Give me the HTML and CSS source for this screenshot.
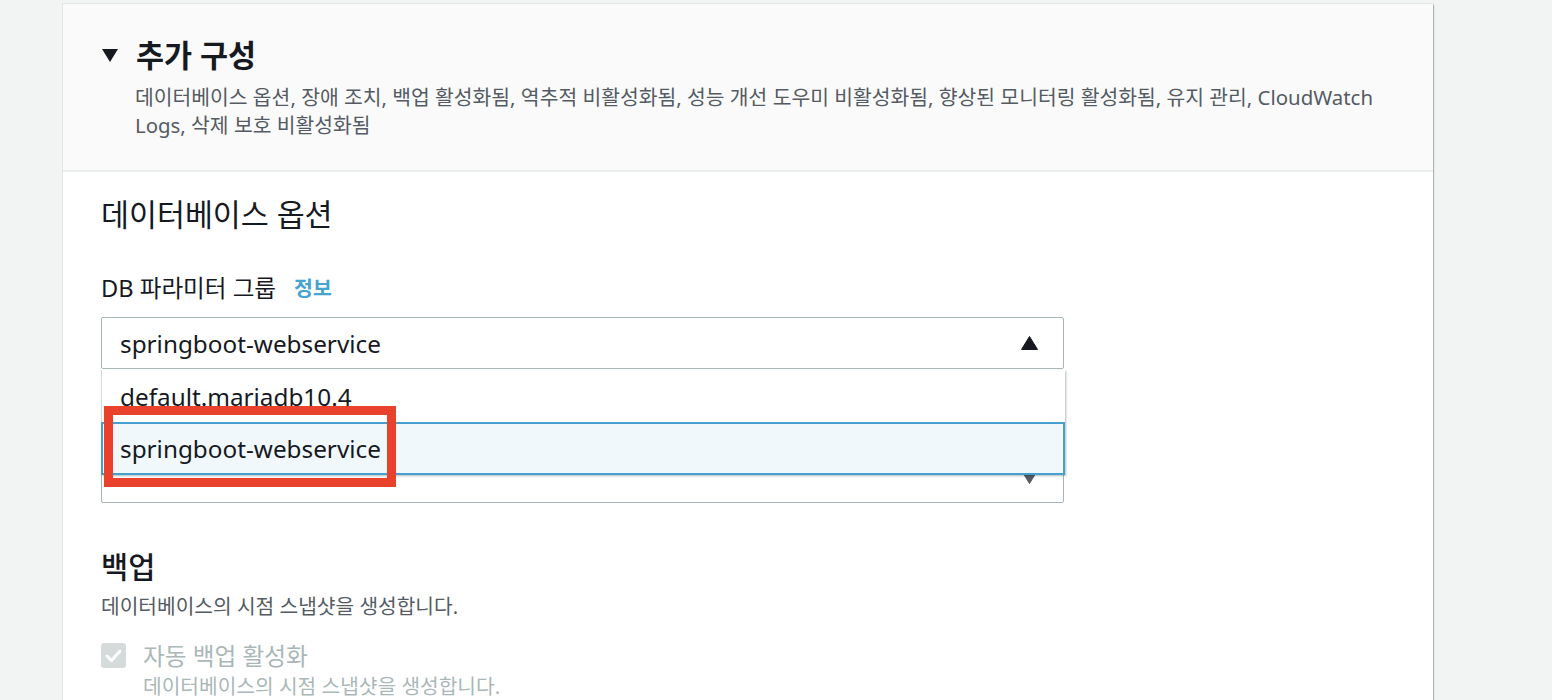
FILE: index.html
```html
<!DOCTYPE html>
<html lang="ko">
<head>
<meta charset="utf-8">
<title>추가 구성</title>
<link rel="stylesheet" href="styles.css">
</head>
<body>
<div class="card">
  <div class="card-header">
    <div class="title-row">
      <svg class="caret" width="16" height="13" viewBox="0 0 16 13"><path d="M0 0H16L8 13Z" fill="#16191f"/></svg>
      <h2 class="title">추가 구성</h2>
    </div>
    <p class="summary">데이터베이스 옵션, 장애 조치, 백업 활성화됨, 역추적 비활성화됨, 성능 개선 도우미 비활성화됨, 향상된 모니터링 활성화됨, 유지 관리, CloudWatch Logs, 삭제 보호 비활성화됨</p>
  </div>
  <div class="card-body">
    <h3 class="section-title">데이터베이스 옵션</h3>
    <div class="field">
      <div class="label">DB 파라미터 그룹 <a class="info">정보</a></div>
      <div class="select-wrap">
        <div class="select">
          <span class="value">springboot-webservice</span>
          <svg class="arrow" width="17" height="14" viewBox="0 0 17 14"><path d="M8.5 0.5L16.5 13.5H0.5Z" fill="#16191f" stroke="#16191f" stroke-linejoin="round"/></svg>
        </div>
        <ul class="dropdown">
          <li class="option">default.mariadb10.4</li>
          <li class="option selected">springboot-webservice</li>
        </ul>
        <div class="annotation"></div>
      </div>
    </div>
    <div class="field field-second">
      <div class="label-space"></div>
      <div class="select">
        <span class="value">default:mariadb-10-4</span>
        <svg class="arrow" width="17" height="14" viewBox="0 0 17 14"><path d="M0.5 0.5H16.5L8.5 13.5Z" fill="#545b64" stroke="#545b64" stroke-linejoin="round"/></svg>
      </div>
    </div>
    <h3 class="section-title backup">백업</h3>
    <p class="section-desc">데이터베이스의 시점 스냅샷을 생성합니다.</p>
    <div class="check-row">
      <span class="checkbox">
        <svg width="25" height="25" viewBox="0 0 25 25"><path d="M6 13L10.5 17.5L19 8" fill="none" stroke="#fff" stroke-width="3" stroke-linecap="round" stroke-linejoin="round"/></svg>
      </span>
      <span class="check-label">자동 백업 활성화</span>
    </div>
    <p class="check-desc">데이터베이스의 시점 스냅샷을 생성합니다.</p>
  </div>
</div>
</body>
</html>
```
FILE: styles.css
```css
* { box-sizing: border-box; }
html, body {
  margin: 0;
  padding: 0;
  background: #f2f3f3;
  font-family: "Noto Sans", "Noto Sans CJK KR", sans-serif;
  color: #16191f;
  overflow: hidden;
}
.card {
  margin: 4px 0 0 63px;
  width: 1370px;
  height: 720px;
  background: #fff;
  box-shadow: 0 0 0 1px rgba(0, 28, 36, 0.06), 1px 1px 1px 0 rgba(0, 28, 36, 0.25);
}
.card-header {
  background: #fafafa;
  padding: 34px 38px 31px 38px;
  border-bottom: 2px solid #eaeded;
}
.title-row {
  display: flex;
  align-items: center;
  gap: 18px;
  height: 34px;
}
.caret { flex: none; margin-left: 1px; }
.title {
  margin: 0;
  font-size: 30.5px;
  line-height: 34px;
  font-weight: 700;
}
.summary {
  margin: 11px 0 0 34px;
  font-size: 20.4px;
  line-height: 28px;
  color: #545b64;
}
.card-body {
  padding: 26px 38px 0 38px;
}
.section-title {
  margin: 0;
  font-size: 30.4px;
  line-height: 34px;
  font-weight: 400;
}
.field { margin-top: 43px; }
.field-second { margin-top: 40px; }
.label {
  font-size: 23.6px;
  line-height: 26px;
  margin-bottom: 16px;
  display: flex;
  align-items: center;
}
.label-space {
  height: 26px;
  margin-bottom: 16px;
}
.info {
  margin-left: 18px;
  font-size: 20.5px;
  font-weight: 700;
  color: #44a3cf;
}
.select-wrap { position: relative; width: 963px; }
.select {
  width: 963px;
  height: 52px;
  border: 1px solid #aab7b8;
  border-radius: 2px;
  display: flex;
  align-items: center;
  justify-content: space-between;
  padding: 0 25px 0 18px;
  font-size: 24.3px;
  background: #fff;
}
.field-second .value { padding-bottom: 25px; }
.dropdown {
  position: absolute;
  top: 53px;
  left: 0;
  width: 964px;
  margin: 0;
  padding: 0;
  list-style: none;
  background: #fff;
  border-left: 1px solid #d5dbdb;
  box-shadow: 1px 1px 2px rgba(0, 28, 36, 0.3);
  z-index: 2;
}
.option {
  height: 52px;
  display: flex;
  align-items: center;
  padding-left: 18px;
  font-size: 24.3px;
}
.option.selected {
  height: 53px;
  margin-left: -1px;
  padding-left: 17px;
  border: 2px solid #44a0cc;
  background: #f1f8fc;
}
.annotation {
  position: absolute;
  left: 3px;
  top: 89px;
  width: 292px;
  height: 81px;
  border: 9px solid #e8412c;
  z-index: 3;
}
.backup {
  margin-top: 47px;
  font-size: 29.5px;
  font-weight: 500;
}
.section-desc {
  margin: 9px 0 0 0;
  font-size: 20.3px;
  line-height: 26px;
  color: #545b64;
}
.check-row {
  margin-top: 21px;
  display: flex;
  align-items: center;
  gap: 17px;
  height: 30px;
}
.checkbox {
  width: 25px;
  height: 25px;
  border-radius: 3px;
  background: #d5dbdb;
  display: flex;
}
.check-label {
  font-size: 23.7px;
  color: #aab7b8;
}
.check-desc {
  margin: 3px 0 0 42px;
  font-size: 20.3px;
  line-height: 26px;
  color: #aab7b8;
}
```
